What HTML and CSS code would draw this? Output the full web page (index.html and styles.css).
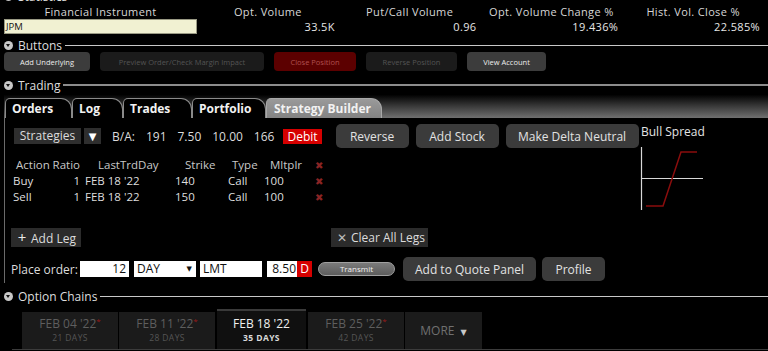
FILE: index.html
```html
<!DOCTYPE html>
<html lang="en">
<head>
  <meta charset="UTF-8">
  <title>Strategy Builder</title>
  <link rel="stylesheet" href="styles.css">
</head>
<body>

  <div class="section-head first">
    <span class="toggle"></span><span class="section-title">Statistics</span><span class="rule"></span>
  </div>

  <div class="stats">
    <div class="stat-label">Financial Instrument</div>
    <div class="stat-label">Opt. Volume</div>
    <div class="stat-label">Put/Call Volume</div>
    <div class="stat-label">Opt. Volume Change %</div>
    <div class="stat-label">Hist. Vol. Close %</div>
    <div class="symbol">JPM</div>
    <div class="stat-value">33.5K</div>
    <div class="stat-value">0.96</div>
    <div class="stat-value">19.436%</div>
    <div class="stat-value">22.585%</div>
  </div>

  <div class="section-head">
    <span class="toggle"></span><span class="section-title">Buttons</span><span class="rule"></span>
  </div>

  <div class="action-row">
    <button class="mini on w-underlying">Add Underlying</button>
    <button class="mini off w-preview">Preview Order/Check Margin Impact</button>
    <button class="mini danger w-close">Close Position</button>
    <button class="mini off w-reverse">Reverse Position</button>
    <button class="mini on w-account">View Account</button>
  </div>

  <div class="section-head">
    <span class="toggle"></span><span class="section-title">Trading</span><span class="rule thick"></span>
  </div>

  <div class="tab-strip">
    <div class="tab w-orders">Orders</div>
    <div class="tab w-log">Log</div>
    <div class="tab w-trades">Trades</div>
    <div class="tab w-portfolio">Portfolio</div>
    <div class="tab active w-builder">Strategy Builder</div>
  </div>

  <div class="panel">
    <div class="builder">
      <div class="toolbar">
        <span class="flat strategies">Strategies</span>
        <span class="flat arrow">&#9660;</span>
        <span class="quote">B/A:</span>
        <span class="quote">191</span>
        <span class="quote">7.50</span>
        <span class="quote">10.00</span>
        <span class="quote">166</span>
        <span class="debit">Debit</span>
        <button class="btn w-rev">Reverse</button>
        <button class="btn w-stock">Add Stock</button>
        <button class="btn w-delta">Make Delta Neutral</button>
      </div>

      <div class="legs">
        <div class="lh c-action">Action</div>
        <div class="lh c-ratio">Ratio</div>
        <div class="lh c-day">LastTrdDay</div>
        <div class="lh c-strike">Strike</div>
        <div class="lh c-type">Type</div>
        <div class="lh c-mult">Mltplr</div>
        <div class="del">&#10006;</div>

        <div class="ld c-action">Buy</div>
        <div class="ld c-ratio">1</div>
        <div class="ld c-day">FEB 18 '22</div>
        <div class="ld c-strike">140</div>
        <div class="ld c-type">Call</div>
        <div class="ld c-mult">100</div>
        <div class="del">&#10006;</div>

        <div class="ld c-action">Sell</div>
        <div class="ld c-ratio">1</div>
        <div class="ld c-day">FEB 18 '22</div>
        <div class="ld c-strike">150</div>
        <div class="ld c-type">Call</div>
        <div class="ld c-mult">100</div>
        <div class="del">&#10006;</div>
      </div>

      <div class="leg-actions">
        <span class="flat add-leg"><span class="glyph">+</span>Add Leg</span>
        <span class="flat clear-legs"><span class="glyph thin">&#10005;</span>Clear All Legs</span>
      </div>

      <div class="order-row">
        <span class="order-label">Place order:</span>
        <span class="field qty">12</span>
        <span class="field tif">DAY <span class="caret">&#9660;</span></span>
        <span class="field otype">LMT</span>
        <span class="price"><span class="field lmt">8.50</span><span class="side">D</span></span>
        <span class="transmit">Transmit</span>
        <button class="btn w-quote">Add to Quote Panel</button>
        <button class="btn w-profile">Profile</button>
      </div>
    </div>

    <div class="chart">
      <div class="chart-title">Bull Spread</div>
      <svg width="70" height="70" viewBox="0 0 70 70">
        <line x1="2.5" y1="3" x2="2.5" y2="66" stroke="#d8d8d8" stroke-width="1.2"/>
        <line x1="2" y1="34.5" x2="64" y2="34.5" stroke="#d8d8d8" stroke-width="1.2"/>
        <polyline points="7,62 24,62 42,8 58,8" fill="none" stroke="#8a0d0d" stroke-width="1.5"/>
      </svg>
    </div>
  </div>

  <div class="section-head chains-head">
    <span class="toggle"></span><span class="section-title">Option Chains</span><span class="rule"></span>
  </div>

  <div class="expiries">
    <div class="expiry">
      <div class="exp-date">FEB 04 '22<sup>*</sup></div>
      <div class="exp-days">21 DAYS</div>
    </div>
    <div class="expiry">
      <div class="exp-date">FEB 11 '22<sup>*</sup></div>
      <div class="exp-days">28 DAYS</div>
    </div>
    <div class="expiry current">
      <div class="exp-date">FEB 18 '22</div>
      <div class="exp-days">35 DAYS</div>
    </div>
    <div class="expiry">
      <div class="exp-date">FEB 25 '22<sup>*</sup></div>
      <div class="exp-days">42 DAYS</div>
    </div>
    <div class="expiry more">MORE <span class="more-caret">&#9660;</span></div>
  </div>

</body>
</html>
```

FILE: styles.css
```css
body {
  margin: 0;
  background: #000;
  color: #dcdcdc;
  font-family: 'Open Sans', 'DejaVu Sans', sans-serif;
  font-size: 11.5px;
  white-space: nowrap;
  width: 768px;
  height: 351px;
  overflow: hidden;
}

button {
  font-family: inherit;
  border: none;
  padding: 0;
  cursor: pointer;
  flex: none;
}

/* section headers */
.section-head {
  display: flex;
  align-items: center;
  height: 14px;
  padding-left: 4px;
  margin-top: 4px;
}

.section-head.first { margin-top: -11px; }
.section-head.chains-head { margin-top: 6px; }

.toggle {
  position: relative;
  width: 9px;
  height: 9px;
  border-radius: 50%;
  background: #c8c8c8;
  flex: none;
}

.toggle::after {
  content: '';
  position: absolute;
  left: 2px;
  top: 3px;
  border-left: 2.5px solid transparent;
  border-right: 2.5px solid transparent;
  border-top: 3px solid #111;
}

.section-title {
  margin-left: 5px;
  font-size: 12px;
  color: #dedede;
}

.rule {
  flex: 1;
  height: 1px;
  background: #c8c8c8;
  margin-left: 3px;
}

.rule.thick {
  height: 2px;
  background: #8c8c8c;
}

/* statistics */
.stats {
  display: grid;
  grid-template-columns: 193px repeat(4, 1fr);
  padding: 1px 4px 0;
}

.stat-label {
  text-align: center;
  height: 15px;
  line-height: 15px;
  font-size: 11px;
  letter-spacing: 0.35px;
  color: #d6d6d6;
}

.stat-value {
  text-align: right;
  padding-right: 4px;
  height: 15px;
  line-height: 15px;
  font-size: 11px;
  letter-spacing: 0.35px;
  color: #e6e6e6;
}

.symbol {
  height: 13px;
  line-height: 14px;
  background: #f1f1d2;
  border: 1px solid #9a9a84;
  color: #111;
  font-size: 9.5px;
  padding-left: 1px;
}

/* top button row */
.action-row {
  display: flex;
  gap: 10px;
  padding-left: 4px;
}

.mini {
  height: 19px;
  border-radius: 4px;
  font-size: 7.5px;
}

.mini.on { background: #3c3c3c; color: #ececec; }
.mini.off { background: #1b1b1b; color: #545454; }
.mini.danger { background: #5c0000; color: #b05050; }

.w-underlying { width: 86px; }
.w-preview { width: 164px; }
.w-close { width: 82px; }
.w-reverse { width: 91px; }
.w-account { width: 79px; }

.action-row + .section-head { margin-top: 7px; }

/* trading tabs */
.tab-strip {
  display: flex;
  align-items: flex-end;
  height: 26px;
  margin-left: 4px;
  background: linear-gradient(#000 10%, #3a3a3a 55%, #707070);
}

.tab {
  height: 20px;
  line-height: 20px;
  box-sizing: border-box;
  background: #000;
  border: 1px solid #8a8a8a;
  border-bottom: none;
  border-radius: 5px 11px 0 0;
  color: #f2f2f2;
  font-weight: bold;
  font-size: 12px;
  padding-left: 6px;
}

.tab.active {
  background: linear-gradient(#9a9a9a, #838383);
  border-color: #a8a8a8;
  padding-left: 7px;
}

.w-orders { width: 67px; margin-left: 1px; }
.w-log { width: 51px; }
.w-trades { width: 69px; }
.w-portfolio { width: 74px; }
.w-builder { width: 116px; }

/* strategy builder panel */
.panel {
  display: grid;
  grid-template-columns: 1fr 128px;
  margin-left: 4px;
  border-left: 1px solid #6a6a6a;
  padding: 6px 0 1px 6px;
  height: 165px;
  box-sizing: border-box;
}

.toolbar {
  display: flex;
  align-items: center;
  height: 24px;
}

.flat {
  background: #2e2e2e;
  color: #dcdcdc;
  height: 16px;
  line-height: 16px;
  font-size: 12px;
  flex: none;
}

.strategies {
  width: 67px;
  margin-left: 3px;
  text-align: center;
}

.arrow {
  width: 17px;
  margin-left: 3px;
  text-align: center;
  font-size: 10px;
  color: #fff;
}

.quote {
  margin-left: 11px;
  font-size: 12px;
  color: #dcdcdc;
}

.quote:first-of-type { margin-left: 5px; }

.debit {
  margin-left: 9px;
  background: #d60000;
  color: #fff;
  height: 15px;
  line-height: 15px;
  padding: 0 4px;
  font-size: 12px;
}

.btn {
  height: 24px;
  border-radius: 5px;
  background: #3b3b3b;
  color: #e2e2e2;
  font-size: 12px;
  margin-left: 7px;
}

.w-rev { width: 73px; margin-left: 14px; }
.w-stock { width: 83px; }
.w-delta { width: 133px; }

/* legs table */
.legs {
  display: grid;
  grid-template-columns: 41px 30px 86px 50px 42px 49px 14px;
  grid-auto-rows: 16px;
  margin-top: 9px;
  line-height: 16px;
  font-size: 11.5px;
}

.lh { color: #c8c8c8; }
.ld { color: #dedede; }

.lh.c-action { padding-left: 5px; }
.ld.c-action { padding-left: 2px; }
.c-ratio { text-align: right; padding-right: 2px; }
.lh.c-day { padding-left: 16px; }
.ld.c-day { padding-left: 3px; }
.lh.c-strike { padding-left: 17px; }
.ld.c-strike { padding-left: 7px; }
.lh.c-type { padding-left: 14px; }
.ld.c-type { padding-left: 10px; }
.lh.c-mult { padding-left: 10px; }
.ld.c-mult { padding-left: 4px; }

.del {
  color: #8a2424;
  font-size: 10px;
  text-align: center;
  padding-left: 6px;
}

.leg-actions {
  display: flex;
  margin-top: 23px;
  height: 19px;
}

.add-leg,
.clear-legs {
  height: 19px;
  line-height: 19px;
  background: #2b2b2b;
  padding: 0 5px;
}

.clear-legs { margin-left: 250px; padding-right: 3px; }

.glyph {
  display: inline-block;
  width: 12px;
  font-size: 15px;
  color: #e8e8e8;
  margin-right: 3px;
  text-align: center;
}

.glyph.thin {
  font-size: 12px;
  color: #bdbdbd;
}

.order-row {
  display: flex;
  align-items: center;
  margin-top: 10px;
  height: 24px;
}

.order-label {
  font-size: 12px;
  color: #dcdcdc;
  width: 69px;
  flex: none;
}

.field {
  display: inline-block;
  height: 16px;
  line-height: 16px;
  box-sizing: border-box;
  background: #fff;
  color: #111;
  font-size: 12px;
  padding: 0 3px;
  flex: none;
}

.qty { width: 49px; text-align: right; }
.tif { width: 62px; margin-left: 5px; position: relative; }
.otype { width: 62px; margin-left: 4px; }

.caret {
  position: absolute;
  right: 4px;
  top: 0;
  font-size: 7px;
}

.price {
  display: flex;
  margin-left: 5px;
}

.lmt { width: 30px; text-align: right; padding: 0 1px; }

.side {
  width: 15px;
  height: 16px;
  line-height: 16px;
  background: #d60000;
  color: #fff;
  text-align: center;
  font-size: 12px;
}

.transmit {
  width: 75px;
  height: 12px;
  line-height: 12px;
  margin-left: 6px;
  border-radius: 7px;
  border: 1px solid #a0a0a0;
  background: linear-gradient(#7a7a7a, #5c5c5c);
  color: #f0f0f0;
  font-size: 8px;
  text-align: center;
  flex: none;
}

.w-quote { width: 133px; margin-left: 8px; }
.w-profile { width: 63px; margin-left: 6px; }

/* payoff chart */
.chart {
  padding-left: 1px;
}

.chart-title {
  margin-top: 1px;
  font-size: 12px;
  color: #e4e4e4;
  height: 14px;
  line-height: 14px;
}

.chart svg {
  display: block;
  margin-top: 5px;
  margin-left: -2px;
}

/* option chains */
.expiries {
  display: flex;
  align-items: flex-end;
  margin: 6px 0 0 12px;
  padding-left: 10px;
  height: 40px;
  border-bottom: 1px solid #3c3c3c;
}

.expiry {
  width: 96px;
  height: 37px;
  margin-right: 1px;
  background: #1b1b1b;
  text-align: center;
  flex: none;
}

.exp-date {
  margin-top: 4px;
  font-size: 12px;
  line-height: 16px;
  color: #5e5e5e;
}

.exp-date sup {
  color: #9a1a1a;
  font-size: 8px;
  vertical-align: 4px;
  line-height: 0;
}

.exp-days {
  font-size: 8.5px;
  line-height: 11px;
  color: #555;
  letter-spacing: 0.4px;
}

.expiry.current {
  width: 89px;
  height: 40px;
  margin: 0 2px 0 1px;
  background: #101010;
  border-top: 2px solid #3a3a3a;
  box-sizing: border-box;
}

.expiry.current .exp-date {
  margin-top: 5px;
  color: #f0f0f0;
}

.expiry.current .exp-days {
  color: #dadada;
  font-weight: bold;
}

.expiry.more {
  width: 77px;
  line-height: 37px;
  color: #707070;
  font-size: 12px;
}

.more-caret {
  font-size: 8px;
  color: #c8c8c8;
  margin-left: 3px;
}
```
